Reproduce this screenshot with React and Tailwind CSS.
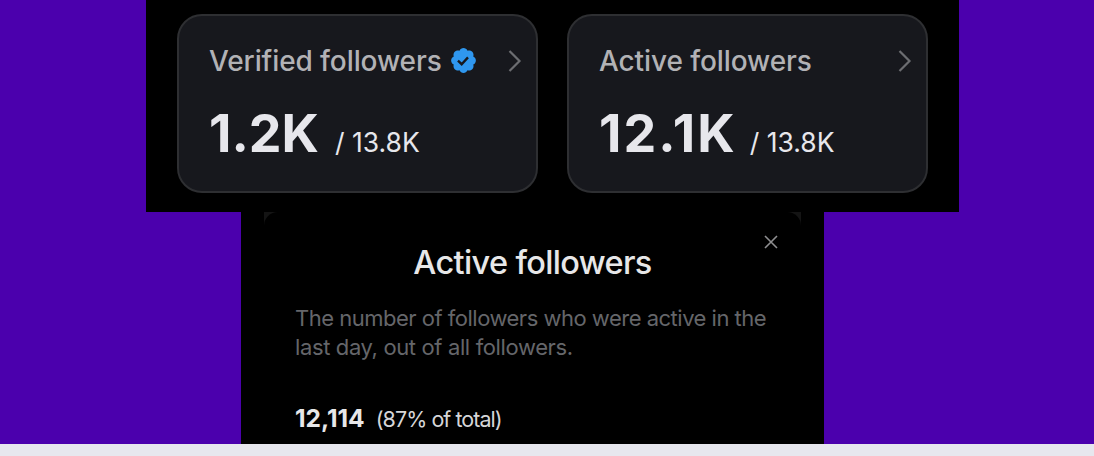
function VerifiedBadge() {
  return (
    <svg className="mb-[2px] ml-[7px] size-[29px] shrink-0 text-[#2f97ef]" viewBox="0 0 22 22" fill="currentColor">
      <path d="M20.396 11c-.018-.646-.215-1.275-.57-1.816-.354-.54-.852-.972-1.438-1.246.223-.607.27-1.264.14-1.897-.131-.634-.437-1.218-.882-1.687-.47-.445-1.053-.75-1.687-.882-.633-.13-1.29-.083-1.897.14-.273-.587-.704-1.086-1.245-1.44S11.647 1.62 11 1.604c-.646.017-1.273.213-1.813.568s-.969.854-1.24 1.44c-.608-.223-1.267-.272-1.902-.14-.635.13-1.22.436-1.69.882-.445.47-.749 1.055-.878 1.688-.13.633-.08 1.29.144 1.896-.587.274-1.087.705-1.443 1.245-.356.54-.555 1.17-.574 1.817.02.647.218 1.276.574 1.817.356.54.856.972 1.443 1.245-.224.606-.274 1.263-.144 1.896.13.634.433 1.218.877 1.688.47.443 1.054.747 1.687.878.633.132 1.29.084 1.897-.136.274.586.705 1.084 1.246 1.439.54.354 1.17.551 1.816.569.647-.016 1.276-.213 1.817-.567s.972-.854 1.245-1.44c.604.239 1.266.296 1.903.164.636-.132 1.22-.447 1.68-.907.46-.46.776-1.044.908-1.681s.075-1.299-.165-1.903c.586-.274 1.084-.705 1.439-1.246.354-.54.551-1.17.569-1.816z" />
      <path d="M6.8 11.1l2.8 2.7 4.8-5.2" fill="none" stroke="#17181d" strokeWidth="1.8" />
    </svg>
  );
}

function StatCard({ label, value, valueClass, total, verified }) {
  return (
    <div className="h-[179px] rounded-[25px] border-2 border-[#2e2f32] bg-[#17181d] pl-[30px] pr-[14px] pt-[29px]">
      <div className="flex h-8 items-center">
        <span className="whitespace-nowrap text-[28px] font-medium leading-8 tracking-[-0.1px] text-[#b2b2b5]">{label}</span>
        {verified && <VerifiedBadge />}
        <svg className="ml-auto h-[22px] w-[14px] text-[#6c6d71]" viewBox="0 0 14 22" fill="none" stroke="currentColor" strokeWidth="2.2">
          <path d="M1.5 1L11.5 11L1.5 21" />
        </svg>
      </div>
      <div className="mt-[26px] flex items-baseline whitespace-nowrap text-[#e7e7ec]">
        <span className={`text-[52px] font-bold leading-[62px] ${valueClass}`}>{value}</span>
        <span className="text-[26.5px]">/ {total}</span>
      </div>
    </div>
  );
}

function ActiveFollowersModal() {
  return (
    <div className="mx-auto h-[232px] w-[583px] bg-black px-[23px]">
      <div className="h-full bg-[#141414]">
        <div className="h-full rounded-t-[14px] bg-black pl-[31px] pt-[23px]">
          <div className="flex justify-end pr-[23px]">
            <svg className="size-[14px] text-[#8f8f91]" viewBox="0 0 14 14" fill="none" stroke="currentColor" strokeWidth="1.6">
              <path d="M1 1L13 13M13 1L1 13" />
            </svg>
          </div>
          <h2 className="-mt-[6px] pr-[31px] text-center text-[32.5px] font-medium leading-10 tracking-[-0.65px] text-[#e7e7e8]">Active followers</h2>
          <p className="mt-[21px] whitespace-nowrap text-[22px] leading-[29px] tracking-[-0.5px] text-[#65666a]">
            The number of followers who were active in the
            <br />
            <span className="tracking-[-0.37px]">last day, out of all followers.</span>
          </p>
          <div className="mt-[41px] flex items-baseline whitespace-nowrap leading-[30px] text-[#e7e7e8]">
            <span className="text-[24.5px] font-bold">12,114</span>
            <span className="ml-[11px] text-[21.5px] tracking-[-0.95px] text-[#d6d6d8]">(87% of total)</span>
          </div>
        </div>
      </div>
    </div>
  );
}

export default function App() {
  return (
    <div className="h-[456px] w-[1094px] overflow-hidden bg-[#4b00ad] font-['Inter',sans-serif]">
      <div className="ml-[146px] grid h-[212px] w-[813px] grid-cols-2 gap-[29px] bg-black px-[31px] pt-[14px]">
        <StatCard label="Verified followers" value="1.2K" valueClass="mr-[16px]" total="13.8K" verified />
        <StatCard label="Active followers" value="12.1K" valueClass="mr-[13px] tracking-[2px]" total="13.8K" />
      </div>
      <div className="pr-[29px]">
        <ActiveFollowersModal />
      </div>
      <div className="h-3 bg-[#e7e7ee]" />
    </div>
  );
}
